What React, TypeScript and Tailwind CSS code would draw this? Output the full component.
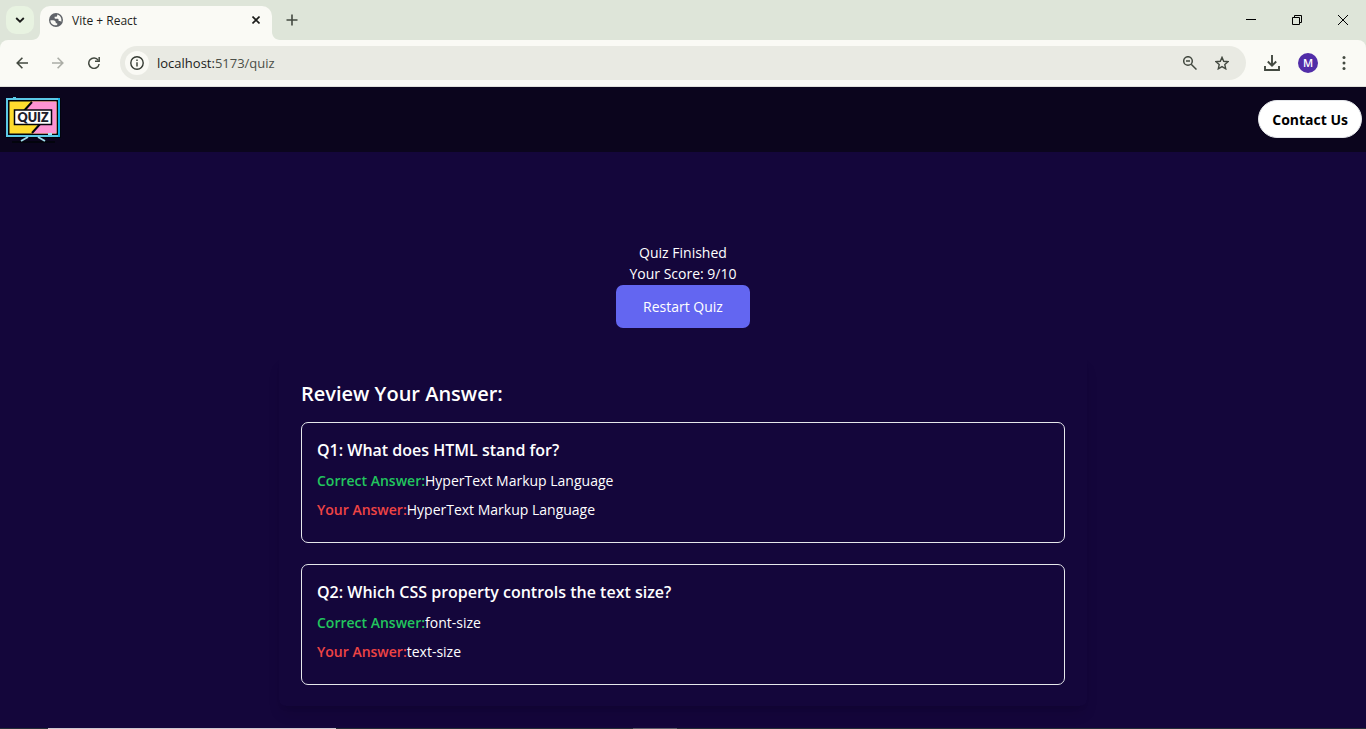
import React from "react";

type Review = { question: string; correct: string; given: string };

const reviews: Review[] = [
  { question: "Q1: What does HTML stand for?", correct: "HyperText Markup Language", given: "HyperText Markup Language" },
  { question: "Q2: Which CSS property controls the text size?", correct: "font-size", given: "text-size" },
];

function TabStrip() {
  return (
    <div className="flex h-10 items-end bg-[#dee5d9]">
      <button aria-label="Search tabs" className="mb-1.5 ml-1.5 flex h-7 w-7 items-center justify-center self-end rounded-[10px] bg-[#e8f3e1]">
        <svg width="10" height="6" viewBox="0 0 10 6" fill="none" stroke="#1b1c1a" strokeWidth="1.8">
          <path d="M1.2 1l3.8 3.7L8.8 1" />
        </svg>
      </button>
      <svg className="ml-[-2px]" width="8" height="8" viewBox="0 0 8 8" fill="#fafaf5">
        <path d="M8 0v8H0c4.400 0 8-3.600 8-8z" />
      </svg>
      <div className="flex h-[34px] w-[232px] items-center rounded-t-[10px] bg-[#fafaf5] pr-2 pb-1.5 pl-[9px]">
        <svg width="14" height="14" viewBox="0 0 14 14">
          <circle cx="7" cy="7" r="7" fill="#5f6368" />
          <path d="M1.400 7.200h2.800c1.500 0 2.600 1 2.600 2.300v.7h1.400v1.900c-3.300.8-6.900-1.200-6.800-4.900zM8.200 1.500v1c0 .7-.6 1.300-1.300 1.300H5.600v1.300c0 .5.300.7.800.7h2c.8 0 1.200.5 1.200 1.300v.8h1.200c.7 0 1.200.4 1.400 1 1-3.200-.8-6.600-4-7.400z" fill="#fafaf5" />
        </svg>
        <span className="ml-[9px] flex-1 pt-px text-xs text-[#1e1f1c]">Vite + React</span>
        <button aria-label="Close tab" className="flex h-4 w-4 items-center justify-center">
          <svg width="8" height="8" viewBox="0 0 8 8" stroke="#1b1c1a" strokeWidth="1.6">
            <path d="M.5.5l7 7M7.500.5l-7 7" />
          </svg>
        </button>
      </div>
      <svg width="8" height="8" viewBox="0 0 8 8" fill="#fafaf5">
        <path d="M0 0v8h8C3.600 8 0 4.400 0 0z" />
      </svg>
      <button aria-label="New tab" className="mb-3.5 ml-1.5 flex h-3 w-3 items-center justify-center">
        <svg width="12" height="12" viewBox="0 0 12 12" stroke="#434940" strokeWidth="1.6">
          <path d="M6 .5v11M.5 6h11" />
        </svg>
      </button>
      <div className="ml-auto flex h-10 items-center">
        <button aria-label="Minimize" className="flex h-10 w-[46px] items-center justify-center">
          <svg width="10" height="10" viewBox="0 0 10 10" fill="#000"><path d="M0 4h10v1H0z" /></svg>
        </button>
        <button aria-label="Restore" className="flex h-10 w-[46px] items-center justify-center">
          <svg width="10" height="10" viewBox="0 0 10 10" fill="none" stroke="#000"><path d="M.5 2.500h7v7h-7zM2.500 2V.5h7v7H8" /></svg>
        </button>
        <button aria-label="Close" className="flex h-10 w-[46px] items-center justify-center">
          <svg width="10" height="10" viewBox="0 0 10 10" stroke="#000" strokeWidth="1"><path d="M0 0l10 10M10 0L0 10" /></svg>
        </button>
      </div>
    </div>
  );
}

function Toolbar() {
  return (
    <div className="bg-[#dee5d9]">
      <div className="flex h-[47px] items-center rounded-t-[8px] border-b border-[#dfe0da] bg-[#fafaf5] pl-4">
        <button aria-label="Back" className="flex w-3 justify-center">
          <svg width="12" height="12" viewBox="0 0 12 12" fill="none" stroke="#434940" strokeWidth="1.600"><path d="M12 6H1.200M6.400.700L1.200 6l5.200 5.300" /></svg>
        </button>
        <button aria-label="Forward" className="ml-6 flex w-3 justify-center">
          <svg width="12" height="12" viewBox="0 0 12 12" fill="none" stroke="#abada6" strokeWidth="1.600"><path d="M0 6h10.800M5.600.700L10.800 6l-5.200 5.300" /></svg>
        </button>
        <button aria-label="Reload" className="ml-6 flex w-3 justify-center">
          <svg width="12" height="12" viewBox="0 0 12 12" fill="none" stroke="#434940" strokeWidth="1.500"><path d="M10.300 3.300A5.200 5.200 0 1 0 11.100 7" /><path d="M11.200 0v4.200H7" /></svg>
        </button>
        <div className="ml-5 flex h-[34px] flex-1 items-center rounded-full bg-[#e9eae3] pr-[17px] pl-[5px]">
          <button aria-label="Site information" className="flex h-6 w-6 items-center justify-center rounded-full bg-[#fafaf5]">
            <svg width="14" height="14" viewBox="0 0 14 14" fill="none" stroke="#343a32" strokeWidth="1.400"><circle cx="7" cy="7" r="6.200" /><path d="M7 6.200v4.200M7 3.500V5" /></svg>
          </button>
          <p className="ml-2 flex-1 text-[13px] text-[#4b4f48]"><span className="text-[#1b1c1a]">localhost:</span>5173/quiz</p>
          <button aria-label="Zoom">
            <svg width="14" height="14" viewBox="0 0 14 14" fill="none" stroke="#434940" strokeWidth="1.500"><circle cx="5" cy="5" r="4.300" /><path d="M8.200 8.200l5.300 5.300M3 5h4" /></svg>
          </button>
          <button aria-label="Bookmark" className="ml-[18px]">
            <svg width="14" height="14" viewBox="0 0 14 14" fill="none" stroke="#434940" strokeWidth="1.400"><path d="M7 1.400l1.700 3.900 4.300.4-3.200 2.900.9 4.200L7 10.600l-3.700 2.200.9-4.200L1 5.700l4.300-.4z" /></svg>
          </button>
        </div>
        <button aria-label="Downloads" className="ml-[18px]">
          <svg width="16" height="16" viewBox="0 0 16 16" fill="none" stroke="#434940" strokeWidth="1.900"><path d="M8 0v10.500M3.800 6.500L8 10.700l4.200-4.200M1 11v4h14v-4" /></svg>
        </button>
        <button className="ml-[18px] h-5 w-5 rounded-full bg-[#512da8] text-[11px] leading-5 font-semibold text-white">M</button>
        <button aria-label="Menu" className="mr-[20px] ml-6">
          <svg width="4" height="14" viewBox="0 0 4 14" fill="#434940"><circle cx="2" cy="1.600" r="1.500" /><circle cx="2" cy="7" r="1.500" /><circle cx="2" cy="12.400" r="1.500" /></svg>
        </button>
      </div>
    </div>
  );
}

function Logo() {
  return (
    <svg width="56" height="48" viewBox="0 0 56 48" role="img" aria-label="Quiz">
      <path d="M0 3h55v40H0z" fill="#03040d" />
      <path d="M1 4h52v37H1z" fill="#03040d" stroke="#5cc9e6" strokeWidth="2" />
      <path d="M53 3v39" stroke="#12b4e8" strokeWidth="2" />
      <path d="M7 3h3" stroke="#5cc9e6" strokeWidth="2" />
      <path d="M3 6h48v33H3z" fill="#ffdc2e" stroke="#03040d" />
      <path d="M26 6.500h24.500v32H26l9-10-17-9z" fill="#fd93d3" />
      <path d="M26 7L16 18M35 28l-9 10" stroke="#03040d" strokeWidth="2" />
      <path d="M8.500 15h37v14.500h-37z" fill="#fff" stroke="#03040d" strokeWidth="1.500" />
      <text x="27" y="26.500" textAnchor="middle" fontFamily="Lato, sans-serif" fontSize="12.500" fontWeight="800" fill="#20202a">QUIZ</text>
      <path d="M42 39h4" stroke="#a5e6f5" strokeWidth="2" />
      <path d="M6 47h43" stroke="#03040d" strokeWidth="2" />
      <path d="M22 42l-7 4M32 42l7 4" stroke="#9edbe8" strokeWidth="2" />
    </svg>
  );
}

export default function App() {
  return (
    <div className="flex min-h-screen flex-col bg-[#14063b] font-['Open_Sans','Noto_Sans',sans-serif] text-sm text-white">
      <TabStrip />
      <Toolbar />
      <header className="flex h-[65px] items-center justify-between bg-[#0b051d] pr-1 pb-px pl-1.5">
        <a href="#home"><Logo /></a>
        <a href="#contact" className="flex h-[38px] items-center rounded-full border border-[#e5e7eb] bg-white px-[13px] pt-px font-bold text-black">Contact Us</a>
      </header>
      <main className="flex flex-1 flex-col items-center pt-[90px]">
        <p className="leading-[21px]">Quiz Finished</p>
        <p className="leading-[21px]">Your Score: 9/10</p>
        <button className="mt-px h-[43px] rounded-[7px] bg-[#6366f1] px-[27px]">Restart Quiz</button>
        <section className="mt-7 w-full max-w-[808px] rounded-[7px] px-[22px] pt-[22px] pb-[21px] shadow-lg">
          <h2 className="text-xl leading-8 font-semibold">Review Your Answer:</h2>
          <div className="mt-3 flex flex-col gap-[21px]">
            {reviews.map((r) => (
              <article key={r.question} className="h-[121px] rounded-[7px] border border-[#e5e7eb] px-[15px] pt-[13px]">
                <h3 className="text-base leading-7 font-semibold">{r.question}</h3>
                <p className="mt-1 leading-[25px]"><strong className="font-semibold text-[#22c55e]">Correct Answer:</strong>{r.correct}</p>
                <p className="mt-1 leading-[25px]"><strong className="font-semibold text-[#ef4444]">Your Answer:</strong>{r.given}</p>
              </article>
            ))}
          </div>
        </section>
      </main>
      <footer className="flex h-px bg-[#262f38] pl-12">
        <div className="h-px w-72 bg-[#cdc8d0]" />
        <div className="ml-[297px] h-px w-11 bg-[#5d6069]" />
      </footer>
    </div>
  );
}
